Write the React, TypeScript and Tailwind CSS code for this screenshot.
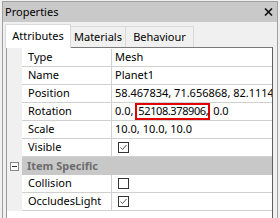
import React from 'react';

type Row = { label: string; value?: React.ReactNode; check?: boolean };

function Check({ on }: { on: boolean }) {
  return (
    <span className="flex h-[11px] w-[11px] items-center justify-center border border-[#333333] bg-white">
      {on && (
        <svg width="9" height="9" viewBox="0 0 9 9" fill="none">
          <path d="M1.5 4.5 L3.5 6.5 L7.5 2" stroke="#555" strokeWidth="1" />
        </svg>
      )}
    </span>
  );
}

function PropRow({ label, value, check }: Row) {
  return (
    <div className="flex h-[18px]">
      <div className="w-[15px] shrink-0 bg-[#f0f0f0]" />
      <div className="flex w-[90px] shrink-0 items-center border-b border-r border-[#d0d0d0] pl-[6px]">{label}</div>
      <div className="flex min-w-0 flex-1 items-center overflow-hidden whitespace-nowrap border-b border-[#d0d0d0] pl-[3px]">
        {check !== undefined ? <span className="ml-[3px]"><Check on={check} /></span> : value}
      </div>
    </div>
  );
}

export default function App() {
  const general: Row[] = [
    { label: 'Type', value: 'Mesh' },
    { label: 'Name', value: 'Planet1' },
    { label: 'Position', value: '58.467834, 71.656868, 82.111412' },
    {
      label: 'Rotation',
      value: (
        <>
          <span>0.0,&nbsp;</span>
          <span className="-ml-[1px] flex h-[17px] items-center border-2 border-[#e00000] pl-[1px] tracking-[-0.4px]">52108.378906,</span>
          <span>&nbsp;0.0</span>
        </>
      ),
    },
    { label: 'Scale', value: '10.0, 10.0, 10.0' },
    { label: 'Visible', check: true },
  ];
  const specific: Row[] = [
    { label: 'Collision', check: false },
    { label: 'OccludesLight', check: true },
  ];

  return (
    <div
      className="h-[218px] w-[280px] overflow-hidden bg-[#f0f0f0] pt-[1px] text-[11px] text-black"
      style={{ fontFamily: '"Noto Sans", sans-serif' }}
    >
      <div className="ml-[2px] mr-[2px] flex h-[217px] flex-col border-l border-r border-t border-[#a0a0a0] bg-[#f0f0f0]">
        <div className="flex h-[20px] shrink-0 items-center justify-between bg-[#c9c9c9] pl-[2px] pr-[4px]">
          <span>Properties</span>
          <svg width="9" height="8" viewBox="0 0 9 8">
            <path d="M1 0.5 L8 7.5 M8 0.5 L1 7.5" stroke="#111" strokeWidth="1.6" />
          </svg>
        </div>
        <div className="flex h-[25px] shrink-0 items-end pl-[2px]">
          <div className="z-10 -mb-[1px] flex h-[24px] w-[66px] items-center justify-center border border-b-0 border-[#d9d9d9] bg-white">
            Attributes
          </div>
          <div className="flex h-[21px] w-[55px] items-center justify-center border-r border-t border-[#d9d9d9]">Materials</div>
          <div className="flex h-[21px] w-[68px] items-center justify-center border-r border-t border-[#d9d9d9]">Behaviour</div>
        </div>
        <div className="ml-[3px] mr-[4px] flex-1 border-l border-r border-t border-l-[#9a9a9a] border-r-[#5f5f5f] border-t-[#7a7a7a] bg-white">
          <div className="flex h-[1px]">
            <div className="w-[15px] bg-[#f0f0f0]" />
          </div>
          {general.map((r) => (
            <PropRow key={r.label} {...r} />
          ))}
          <div className="flex h-[18px]">
            <div className="flex w-[15px] shrink-0 items-center justify-center bg-[#f0f0f0]">
              <span className="flex h-[9px] w-[9px] items-center justify-center border border-[#888888] bg-white">
                <span className="h-px w-[5px] bg-[#333]" />
              </span>
            </div>
            <div className="flex flex-1 items-center bg-[#c8c8c8] pl-[5px] font-bold text-[#6d6d6d]">Item Specific</div>
          </div>
          {specific.map((r) => (
            <PropRow key={r.label} {...r} />
          ))}
        </div>
      </div>
    </div>
  );
}
